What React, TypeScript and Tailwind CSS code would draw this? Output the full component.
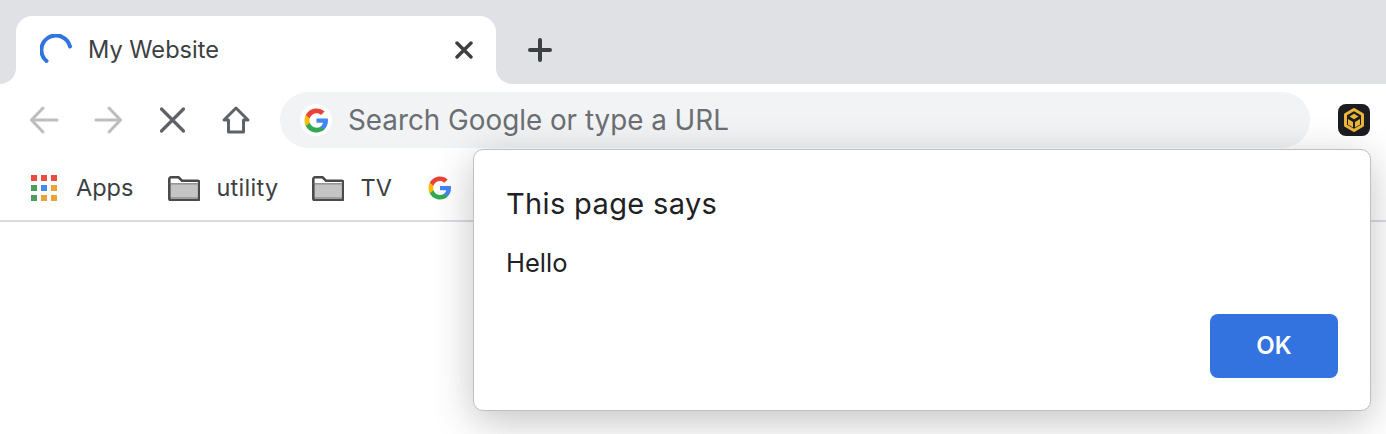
import React from 'react';

const GoogleG = ({ size }: { size: number }) => (
  <svg width={size} height={size} viewBox="0 0 48 48">
    <path fill="#4285F4" d="M46 24.500c0-1.600-.1-3.100-.4-4.500H24v8.500h12.400c-.5 2.900-2.100 5.300-4.600 6.900v5.700h7.400C43.500 36.700 46 31.100 46 24.500z" />
    <path fill="#34A853" d="M24 47c6.200 0 11.400-2.100 15.200-5.500l-7.400-5.700c-2.100 1.400-4.700 2.200-7.800 2.200-6 0-11.100-4-12.900-9.500H3.500v5.900C7.300 41.900 15 47 24 47z" />
    <path fill="#FBBC05" d="M11.100 28.500c-.5-1.400-.7-2.900-.7-4.500s.3-3.100.7-4.500v-5.900H3.500C2 16.700 1 20.200 1 24s1 7.300 2.500 10.400l7.600-5.900z" />
    <path fill="#EA4335" d="M24 10c3.400 0 6.400 1.200 8.800 3.400l6.600-6.600C35.400 3.100 30.200 1 24 1 15 1 7.300 6.100 3.500 13.600l7.600 5.900C12.900 14 18 10 24 10z" />
  </svg>
);

const FolderIcon = () => (
  <svg width="32" height="25" viewBox="0 0 32 25" className="shrink-0">
    <rect x="1" y="8" width="30" height="16" fill="#c4c4c4" />
    <rect x="1" y="21" width="30" height="2" fill="#9e9e9e" />
    <path
      d="M1.300 3a1.700 1.700 0 0 1 1.700-1.700h7.500l3.500 3.400h15.500a1.700 1.700 0 0 1 1.700 1.700v16.200a1.700 1.700 0 0 1-1.700 1.700H3a1.700 1.700 0 0 1-1.700-1.700z"
      fill="none"
      stroke="#4a4a4a"
      strokeWidth="2.600"
    />
    <path d="M1 7.800h30" stroke="#6a6a6a" strokeWidth="1" />
  </svg>
);

const AppsGrid = () => {
  const colors = ['#ea4c3f', '#ea4c3f', '#ea4c3f', '#4f9d5d', '#4489ee', '#e8a33a', '#4f9d5d', '#e8a33a', '#e8a33a'];
  return (
    <div className="grid grid-cols-[6px_6px_6px] grid-rows-[6px_6px_6px] gap-1 shrink-0">
      {colors.map((c, i) => (
        <svg key={i} width="6" height="6" viewBox="0 0 6 6">
          <rect width="6" height="6" fill={c} />
        </svg>
      ))}
    </div>
  );
};

const App: React.FC = () => {
  return (
    <div className="relative w-[1386px] h-[434px] overflow-hidden bg-white font-['Inter','Liberation_Sans',sans-serif]">
      {/* Tab strip */}
      <div className="h-4 bg-[#dfe1e5]" />
      <div className="flex h-[68px]">
        <div className="w-4 bg-[#dfe1e5] rounded-br-2xl" />
        <div className="w-[480px] bg-[#dfe1e5]">
          <div className="h-full bg-white rounded-t-2xl flex items-center pl-6 pr-[23px]">
            <svg width="32" height="32" viewBox="0 0 32 32" className="shrink-0">
              <path d="M30 12.500 A14.500 14.500 0 1 0 6.500 27" fill="none" stroke="#2f74e0" strokeWidth="4" strokeLinecap="round" />
            </svg>
            <span className="ml-[16px] text-[23.600px] leading-none text-[#3c4043]">My Website</span>
            <svg width="18" height="18" viewBox="0 0 18 18" className="ml-auto">
              <path d="M2 2l14 14M16 2L2 16" stroke="#3c4043" strokeWidth="3.400" strokeLinecap="round" />
            </svg>
          </div>
        </div>
        <div className="flex-1 bg-[#dfe1e5] rounded-bl-2xl flex items-center pl-8">
          <svg width="24" height="24" viewBox="0 0 24 24">
            <path d="M12 2v20M2 12h20" stroke="#3c4043" strokeWidth="4" strokeLinecap="round" />
          </svg>
        </div>
      </div>

      {/* Toolbar */}
      <div className="flex items-center h-[72px] pl-3">
        <div className="w-16 flex justify-center">
          <svg width="32" height="32" viewBox="0 0 32 32">
            <path d="M29 16H3.500M15 4L3.500 16 15 28" fill="none" stroke="#bdbdbd" strokeWidth="3" strokeLinecap="round" strokeLinejoin="round" />
          </svg>
        </div>
        <div className="w-16 flex justify-center">
          <svg width="32" height="32" viewBox="0 0 32 32">
            <path d="M4 16h24.500M17 4l11.500 12L17 28" fill="none" stroke="#bdbdbd" strokeWidth="3" strokeLinecap="round" strokeLinejoin="round" />
          </svg>
        </div>
        <div className="w-16 flex justify-center">
          <svg width="32" height="32" viewBox="0 0 32 32">
            <path d="M5.500 5l22 22M27.500 5l-22 22" stroke="#5f6368" strokeWidth="3.200" strokeLinecap="round" />
          </svg>
        </div>
        <div className="w-16 flex justify-center">
          <svg width="32" height="32" viewBox="0 0 32 32">
            <path d="M16 4L4 16h4.500v12h15V16H28z" fill="none" stroke="#5f6368" strokeWidth="3" strokeLinecap="round" strokeLinejoin="round" />
          </svg>
        </div>
        <div className="ml-3 w-[1030px] h-14 rounded-full bg-[#f1f3f4] flex items-center pl-5">
          <div className="w-8 h-8 rounded-full bg-white flex items-center justify-center shrink-0">
            <GoogleG size={25} />
          </div>
          <span className="ml-[16px] mt-[2px] text-[27.800px] leading-none text-[#6b6e72]">Search Google or type a URL</span>
        </div>
        <div className="ml-7 w-8 h-8 rounded-lg bg-[#1b1d21] flex items-center justify-center shrink-0">
          <svg width="24" height="26" viewBox="0 0 24 26">
            <path d="M12 2.500l8.500 5v11L12 23.500l-8.500-5v-11z" fill="none" stroke="#ecb53a" strokeWidth="3" strokeLinejoin="round" />
            <path d="M7.500 9.500l4.500-2.700 4.500 2.700-4.500 2.700z" fill="#ecb53a" />
            <path d="M6 12l5 3v5.500l-5-3zM18 12l-5 3v5.500l5-3z" fill="#ecb53a" />
          </svg>
        </div>
      </div>

      {/* Bookmarks bar */}
      <div className="flex items-center h-[66px] border-b-2 border-[#dadce0] pl-[31px] text-[23.500px] leading-none text-[#3c4043]">
        <AppsGrid />
        <span className="ml-[19px]">Apps</span>
        <div className="ml-[35px]"><FolderIcon /></div>
        <span className="ml-[16px] tracking-[0.3px]">utility</span>
        <div className="ml-[33px]"><FolderIcon /></div>
        <span className="ml-[17px]">TV</span>
        <div className="ml-[36px]"><GoogleG size={24} /></div>
      </div>

      {/* Alert dialog */}
      <div className="absolute left-[473px] top-[149px] w-[898px] h-[262px] bg-white rounded-[10px] border border-[#c0c0c0] shadow-[0_10px_40px_rgba(0,0,0,0.24)] flex flex-col pl-[32px] pr-8">
        <div className="mt-[36px] text-[29px] leading-9 tracking-[0.35px] text-[#202124]">This page says</div>
        <div className="mt-[25px] text-[25.500px] leading-8 text-[#202124]">Hello</div>
        <div className="flex justify-end mt-auto mb-[32px]">
          <div className="w-32 h-16 rounded-lg bg-[#3273e0] flex items-center justify-center text-white text-[24px] font-semibold">OK</div>
        </div>
      </div>
    </div>
  );
};

export default App;
